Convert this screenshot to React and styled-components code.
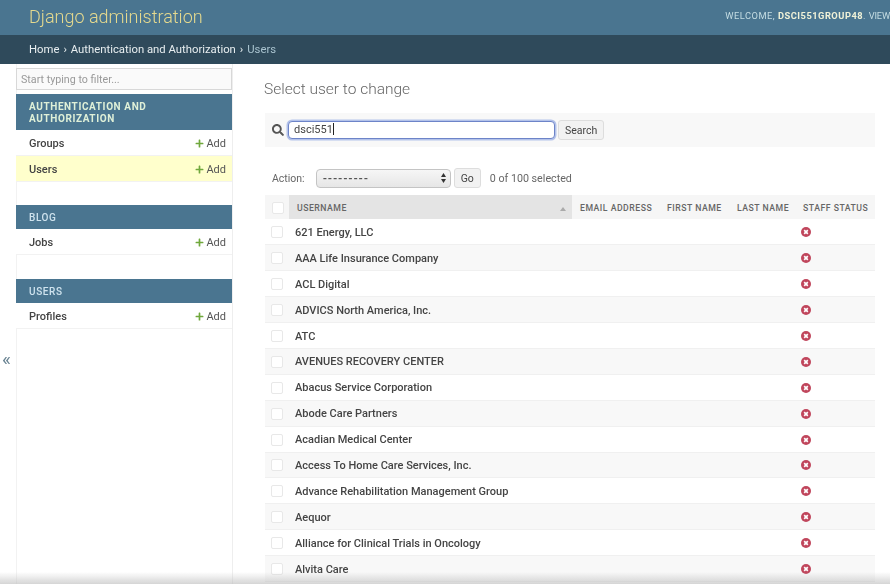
import * as React from 'react';
import styled, { createGlobalStyle } from 'styled-components';
import { FaPlus, FaSearch } from 'react-icons/fa';

const GlobalStyle = createGlobalStyle`
    html, body {
        margin: 0;
        padding: 0;
        background: #fff;
        overflow: hidden;
    }
    body {
        font-family: Roboto, "Liberation Sans", sans-serif;
        color: #333;
    }
`;

const users = [
    '621 Energy, LLC',
    'AAA Life Insurance Company',
    'ACL Digital',
    'ADVICS North America, Inc.',
    'ATC',
    'AVENUES RECOVERY CENTER',
    'Abacus Service Corporation',
    'Abode Care Partners',
    'Acadian Medical Center',
    'Access To Home Care Services, Inc.',
    'Advance Rehabilitation Management Group',
    'Aequor',
    'Alliance for Clinical Trials in Oncology',
    'Alvita Care',
];

const modules = [
    { title: 'Authentication and Authorization', rows: ['Groups', 'Users'], gap: 23 },
    { title: 'Blog', rows: ['Jobs'], gap: 24 },
    { title: 'Users', rows: ['Profiles'], gap: 0 },
];

const Page = styled.div`
    position: relative;
    width: 890px;
    height: 584px;
    overflow: hidden;
    filter: blur(0.35px);
`;

// Header
const Header = styled.header`
    height: 35px;
    box-sizing: border-box;
    padding: 0 0 0 29px;
    background: #4a7590;
    display: flex;
    align-items: center;
    justify-content: space-between;
`;

const Branding = styled.div`
    font-size: 18px;
    font-weight: 300;
    color: #e6da8e;
    margin-top: -2px;
`;

const UserTools = styled.div`
    font-size: 9.3px;
    letter-spacing: 0.5px;
    color: #c5dde3;
    white-space: nowrap;
    margin-top: -4px;

    strong {
        color: #f0f2d8;
        font-weight: 700;
    }

    span {
        letter-spacing: -0.2px;
    }
`;

const Breadcrumbs = styled.div`
    height: 29px;
    box-sizing: border-box;
    padding-left: 29px;
    background: #2f4a5b;
    display: flex;
    align-items: center;
    font-size: 11.3px;
    color: #e8eef0;
`;

const Crumb = styled.span`
    color: ${(p) => (p.$current ? '#a9c3cf' : '#e8eef0')};
`;

const CrumbSep = styled.span`
    margin: 0 4px;
`;

const Main = styled.div`
    display: flex;
    height: 520px;
`;

// Sidebar
const Sidebar = styled.nav`
    width: 217px;
    margin-left: 16px;
    box-sizing: border-box;
    border-right: 1px solid #eee;
    box-shadow: inset 1px 0 0 #f2f2f2;
    padding-top: 4px;
`;

const Filter = styled.div`
    height: 22px;
    width: 216px;
    box-sizing: border-box;
    border: 1px solid #d8d8d8;
    background: #fafafa;
    padding-left: 4px;
    font-size: 10.7px;
    line-height: 21px;
    color: #999;
    margin-bottom: 4px;
`;

const Module = styled.section`
    margin-bottom: ${(p) => p.$gap}px;
`;

const Caption = styled.div`
    background: #4a7590;
    color: ${(p) => (p.$bright ? '#dff0d8' : '#cfe3ee')};
    font-size: 10px;
    font-weight: ${(p) => (p.$bright ? 700 : 500)};
    letter-spacing: 0.6px;
    line-height: 12px;
    text-transform: uppercase;
    padding: 7px 40px 5px 13px;
`;

const SideRow = styled.div`
    height: 26px;
    box-sizing: border-box;
    padding: 1px 6px 0 13px;
    display: flex;
    align-items: center;
    justify-content: space-between;
    border-bottom: 1px solid #f2f2f2;
    background: ${(p) => (p.$current ? '#ffffcc' : '#fff')};
    font-size: 11px;
    font-weight: 500;
    color: #444;
`;

const AddLink = styled.span`
    display: flex;
    align-items: center;
    gap: 2px;
    font-weight: 400;
    color: #555;

    svg {
        color: #70a83c;
    }
`;

const Collapse = styled.div`
    position: absolute;
    left: 2px;
    top: 347px;
    font-size: 19px;
    color: #6a8493;
`;

// Content
const Content = styled.main`
    flex: 1;
    padding: 16px 15px 0 32px;
    min-width: 0;
`;

const Title = styled.h1`
    margin: 0 0 14px -1px;
    font-size: 15.5px;
    line-height: 19px;
    font-weight: 300;
    color: #666;
`;

const Toolbar = styled.div`
    height: 34px;
    box-sizing: border-box;
    background: #f8f8f8;
    padding-left: 7px;
    display: flex;
    align-items: center;
    margin-bottom: 21px;
    color: #555;
`;

const SearchBox = styled.div`
    width: 260px;
    height: 16px;
    margin-left: 4px;
    padding-left: 5px;
    border: 1px solid #6d84c8;
    border-radius: 4px;
    box-shadow: 0 0 0 1.5px #b4c3ea;
    background: #fff;
    font-size: 11px;
    line-height: 16px;
    color: #444;
`;

const Caret = styled.i`
    display: inline-block;
    width: 1px;
    height: 12px;
    vertical-align: -2px;
    background: #222;
`;

const Button = styled.div`
    height: 20px;
    box-sizing: border-box;
    padding: 0 ${(p) => p.$pad}px;
    margin-left: ${(p) => p.$left}px;
    border: 1px solid #ddd;
    border-radius: 3px;
    background: #f2f2f2;
    font-size: 10.5px;
    line-height: 19px;
    color: #444;
`;

const Actions = styled.div`
    height: 20px;
    padding-left: 7px;
    display: flex;
    align-items: center;
    font-size: 10.5px;
    color: #666;
    margin-bottom: 7px;
`;

const ActionSelect = styled.div`
    width: 135px;
    height: 19px;
    box-sizing: border-box;
    margin-left: 11px;
    padding: 0 4px 0 6px;
    display: flex;
    align-items: center;
    justify-content: space-between;
    border: 1px solid #c4c4c4;
    border-radius: 4px;
    background: linear-gradient(#f6f6f6, #e6e6e6);
    font-size: 11px;
    letter-spacing: 0.8px;
    font-weight: 700;
    color: #555;
`;

const Selected = styled.span`
    margin-left: 9px;
    font-size: 10.7px;
`;

const Table = styled.table`
    width: 610px;
    table-layout: fixed;
    border-collapse: collapse;
`;

const HeadCell = styled.th`
    height: 24px;
    box-sizing: border-box;
    padding: 1px 0 0 ${(p) => p.$pad || 8}px;
    background: ${(p) => (p.$sorted ? '#e4e4e4' : '#f6f6f6')};
    font-size: 8.7px;
    font-weight: 500;
    letter-spacing: 0.5px;
    text-align: left;
    text-transform: uppercase;
    color: #666;
    white-space: nowrap;
    position: relative;
`;

const SortArrow = styled.b`
    position: absolute;
    right: 6px;
    top: 12px;
    border: 3.5px solid transparent;
    border-top: 0;
    border-bottom: 4px solid #aaa;
`;

const Row = styled.tr`
    height: 25.9px;
    background: ${(p) => (p.$even ? '#f8f8f8' : '#fff')};
    border-bottom: 1px solid #f0f0f0;
`;

const Cell = styled.td`
    padding: 1px 0 0 ${(p) => p.$pad || 0}px;
    font-size: 11px;
    font-weight: 500;
    color: #444;
    vertical-align: middle;
`;

const Check = styled.div`
    width: 10px;
    height: 10px;
    margin-left: 6px;
    border: 1px solid #e8e8e8;
    border-radius: 2px;
    background: #fff;
`;

const StaffSvg = styled.svg`
    display: block;
    width: 10px;
    height: 10px;
    margin-left: 6px;
`;

// Django's icon-no: red disc with a white cross
const StaffIcon = () => (
    <StaffSvg viewBox="0 0 10 10">
        <circle cx="5" cy="5" r="5" fill="#c0465c" />
        <path d="M3.2 3.2 L6.8 6.8 M6.8 3.2 L3.2 6.8" stroke="#fff" strokeWidth="1.7" />
    </StaffSvg>
);

// Native select's up/down arrows
const SelectArrows = () => (
    <svg width="5" height="10" viewBox="0 0 5 10">
        <path d="M2.5 0 L5 4 L0 4 Z M2.5 10 L5 6 L0 6 Z" fill="#333" />
    </svg>
);

const BottomFade = styled.div`
    position: absolute;
    left: 0;
    right: 0;
    bottom: 0;
    height: 12px;
    background: linear-gradient(rgba(225, 225, 225, 0), rgba(190, 190, 190, 0.65));
`;

class App extends React.Component {
    render() {
        return (
            <Page>
                <GlobalStyle />
                <Header>
                    <Branding>Django administration</Branding>
                    <UserTools>WELCOME, <strong>DSCI551GROUP48</strong>. <span>VIEW</span></UserTools>
                </Header>
                <Breadcrumbs>
                    <Crumb>Home</Crumb>
                    <CrumbSep>›</CrumbSep>
                    <Crumb>Authentication and Authorization</Crumb>
                    <CrumbSep>›</CrumbSep>
                    <Crumb $current>Users</Crumb>
                </Breadcrumbs>
                <Main>
                    <Sidebar>
                        <Filter>Start typing to filter...</Filter>
                        {modules.map((m, i) => (
                            <Module key={m.title} $gap={m.gap}>
                                <Caption $bright={i === 0}>{m.title}</Caption>
                                {m.rows.map((r) => (
                                    <SideRow key={r} $current={r === 'Users'}>
                                        {r}
                                        <AddLink><FaPlus size={9} /> Add</AddLink>
                                    </SideRow>
                                ))}
                            </Module>
                        ))}
                    </Sidebar>
                    <Collapse>«</Collapse>
                    <Content>
                        <Title>Select user to change</Title>
                        <Toolbar>
                            <FaSearch size={12} />
                            <SearchBox>dsci551<Caret /></SearchBox>
                            <Button $pad={6} $left={3}>Search</Button>
                        </Toolbar>
                        <Actions>
                            Action:
                            <ActionSelect>---------<SelectArrows /></ActionSelect>
                            <Button $pad={6} $left={3}>Go</Button>
                            <Selected>0 of 100 selected</Selected>
                        </Actions>
                        <Table>
                            <colgroup>
                                <col width="24" />
                                <col width="283" />
                                <col width="87" />
                                <col width="70" />
                                <col width="66" />
                                <col width="80" />
                            </colgroup>
                            <thead>
                                <tr>
                                    <HeadCell $pad={1}><Check /></HeadCell>
                                    <HeadCell $sorted>Username<SortArrow /></HeadCell>
                                    <HeadCell>Email address</HeadCell>
                                    <HeadCell>First name</HeadCell>
                                    <HeadCell>Last name</HeadCell>
                                    <HeadCell>Staff status</HeadCell>
                                </tr>
                            </thead>
                            <tbody>
                                {users.map((u, i) => (
                                    <Row key={u} $even={i % 2 === 1}>
                                        <Cell><Check /></Cell>
                                        <Cell $pad={6}>{u}</Cell>
                                        <Cell />
                                        <Cell />
                                        <Cell />
                                        <Cell><StaffIcon /></Cell>
                                    </Row>
                                ))}
                            </tbody>
                        </Table>
                    </Content>
                </Main>
                <BottomFade />
            </Page>
        );
    }
}

export default App;
